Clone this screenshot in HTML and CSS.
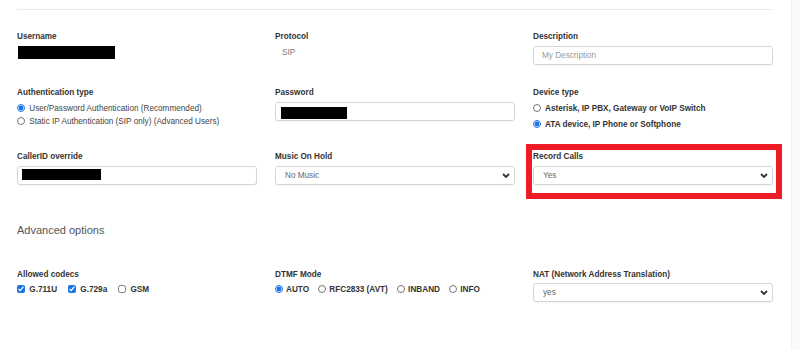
FILE: index.html
```html
<!DOCTYPE html>
<html>
<head>
    <title>SIP Account</title>
    <meta charset="utf-8">
    <link rel="stylesheet" href="styles.css">
</head>
<body>
<div class="layout">
    <div class="content">
        <div class="divider"></div>

        <div class="row row-basic">
            <div class="field">
                <div class="field-label">Username</div>
                <div class="plain-value"><span class="redacted redacted-user"></span></div>
            </div>
            <div class="field">
                <div class="field-label">Protocol</div>
                <div class="plain-value protocol">SIP</div>
            </div>
            <div class="field">
                <div class="field-label">Description</div>
                <input class="text-input" type="text" placeholder="My Description">
            </div>
        </div>

        <div class="row row-auth">
            <div class="field">
                <div class="field-label">Authentication type</div>
                <div class="options options-stacked">
                    <label class="option"><input type="radio" name="auth" checked> User/Password Authentication (Recommended)</label>
                    <label class="option"><input type="radio" name="auth"> Static IP Authentication (SIP only) (Advanced Users)</label>
                </div>
            </div>
            <div class="field">
                <div class="field-label">Password</div>
                <div class="text-input"><span class="redacted redacted-pass"></span></div>
            </div>
            <div class="field">
                <div class="field-label">Device type</div>
                <div class="options options-stacked options-device">
                    <label class="option"><input type="radio" name="device"> Asterisk, IP PBX, Gateway or VoIP Switch</label>
                    <label class="option"><input type="radio" name="device" checked> ATA device, IP Phone or Softphone</label>
                </div>
            </div>
        </div>

        <div class="row row-calls">
            <div class="field">
                <div class="field-label">CallerID override</div>
                <div class="text-input"><span class="redacted redacted-caller"></span></div>
            </div>
            <div class="field">
                <div class="field-label">Music On Hold</div>
                <div class="select-wrap">
                    <select class="select-input"><option>No Music</option></select>
                    <svg class="chevron" viewBox="0 0 8 5" width="8" height="5"><path d="M1 1 L4 4 L7 1" fill="none" stroke="#333" stroke-width="1.8"/></svg>
                </div>
            </div>
            <div class="field field-marked">
                <div class="field-label">Record Calls</div>
                <div class="select-wrap">
                    <select class="select-input"><option>Yes</option></select>
                    <svg class="chevron" viewBox="0 0 8 5" width="8" height="5"><path d="M1 1 L4 4 L7 1" fill="none" stroke="#333" stroke-width="1.8"/></svg>
                </div>
            </div>
        </div>

        <h2 class="section-title">Advanced options</h2>

        <div class="row row-advanced">
            <div class="field">
                <div class="field-label">Allowed codecs</div>
                <div class="options options-inline">
                    <label class="option"><input type="checkbox" checked> G.711U</label>
                    <label class="option"><input type="checkbox" checked> G.729a</label>
                    <label class="option"><input type="checkbox"> GSM</label>
                </div>
            </div>
            <div class="field">
                <div class="field-label">DTMF Mode</div>
                <div class="options options-inline options-dtmf">
                    <label class="option"><input type="radio" name="dtmf" checked> AUTO</label>
                    <label class="option"><input type="radio" name="dtmf"> RFC2833 (AVT)</label>
                    <label class="option"><input type="radio" name="dtmf"> INBAND</label>
                    <label class="option"><input type="radio" name="dtmf"> INFO</label>
                </div>
            </div>
            <div class="field">
                <div class="field-label">NAT (Network Address Translation)</div>
                <div class="select-wrap">
                    <select class="select-input"><option>yes</option></select>
                    <svg class="chevron" viewBox="0 0 8 5" width="8" height="5"><path d="M1 1 L4 4 L7 1" fill="none" stroke="#333" stroke-width="1.8"/></svg>
                </div>
            </div>
        </div>
    </div>
    <div class="side-strip"></div>
</div>
</body>
</html>
```

FILE: styles.css
```css
body {
    margin: 0;
    font-family: "Liberation Sans", Arial, sans-serif;
    color: #333;
    background: #fff;
}
.layout {
    display: flex;
    height: 350px;
    overflow: hidden;
}
.content {
    width: 756px;
    padding: 9px 0 0 17px;
}
.side-strip {
    margin-left: 18px;
    flex: 1;
    background: #fafafa;
    border-left: 1px solid #f0f0ec;
}
.divider {
    border-top: 1px solid #ececec;
}
.row {
    display: grid;
    grid-template-columns: 240px 240px 240px;
    column-gap: 18px;
}
.row-basic {
    margin-top: 22px;
}
.row-auth {
    margin-top: 23px;
}
.row-calls {
    margin-top: 19px;
}
.row-advanced {
    margin-top: 33px;
}
.row-advanced .field-label {
    margin-bottom: 3px;
}
.field {
    position: relative;
}
.field-label {
    font-size: 8.2px;
    font-weight: bold;
    line-height: 10px;
    margin-bottom: 4px;
    color: #333;
}
.field-marked::after {
    content: "";
    position: absolute;
    top: -8px;
    left: -7px;
    right: -9px;
    bottom: -14px;
    border: 6px solid #ee1c25;
}
.plain-value {
    height: 19px;
    font-size: 8.2px;
    line-height: 13px;
}
.protocol {
    padding-left: 7px;
    color: #777;
}
.redacted {
    display: block;
    background: #000;
}
.redacted-user {
    width: 97px;
    height: 13px;
    margin: 1px 0 0 1px;
}
.redacted-pass {
    width: 66px;
    height: 12px;
    margin: 4px 0 0 5px;
}
.redacted-caller {
    width: 79px;
    height: 11px;
    margin: 2px 0 0 4px;
}
.text-input,
.select-input {
    box-sizing: border-box;
    display: block;
    width: 100%;
    height: 19px;
    margin: 0;
    border: 1px solid #d6d6d6;
    border-radius: 3px;
    background: #fff;
    box-shadow: 0 1px 1px rgba(0, 0, 0, 0.04);
    font-family: "Liberation Sans", Arial, sans-serif;
    font-size: 8.2px;
    color: #666;
}
input.text-input {
    padding: 0 8px;
    outline: none;
}
.text-input::placeholder {
    color: #9a9a9a;
}
.select-wrap {
    position: relative;
}
.select-input {
    appearance: none;
    -webkit-appearance: none;
    padding: 0 9px;
    outline: none;
}
.chevron {
    position: absolute;
    right: 5px;
    top: 7px;
}
.options {
    font-size: 8.2px;
}
.options input {
    width: 8px;
    height: 8px;
    margin: 0 2px 0 0;
    vertical-align: -1px;
    accent-color: #1a73e8;
}
.options-stacked .option {
    display: block;
    line-height: 13px;
    color: #444;
}
.options-device {
    margin-top: -1px;
}
.options-device .option {
    line-height: 16px;
    font-weight: bold;
    color: #333;
}
.options-inline {
    display: flex;
    gap: 11px;
    line-height: 13px;
}
.options-dtmf {
    gap: 9px;
}
.options-dtmf input {
    margin-right: 1px;
}
.options-inline .option {
    font-weight: bold;
    color: #333;
}
.section-title {
    margin: 38px 0 0;
    font-size: 11px;
    line-height: 14px;
    font-weight: normal;
    color: #555;
}
```
